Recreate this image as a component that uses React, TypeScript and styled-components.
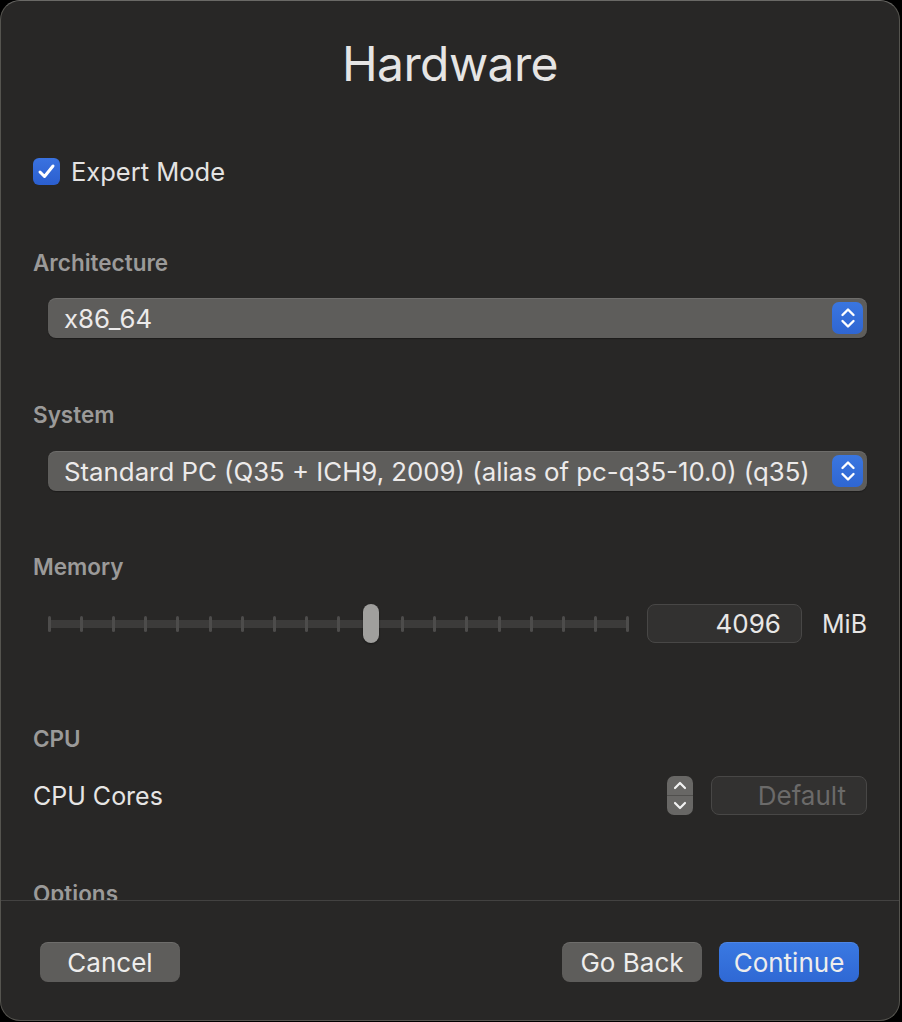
import React from "react";
import styled, { createGlobalStyle } from "styled-components";

const Global = createGlobalStyle`
  html, body { margin: 0; padding: 0; background: #000; }
  body { font-family: Inter, "Noto Sans", sans-serif; -webkit-font-smoothing: antialiased; }
  * { box-sizing: border-box; }
`;

const Window = styled.div`
  width: 900px;
  height: 1021px;
  background: #282726;
  border: 1px solid #55544f;
  border-top-color: #6a6966;
  border-radius: 20px;
  display: flex;
  flex-direction: column;
  overflow: hidden;
`;

const Content = styled.div`
  height: 899px;
  flex-shrink: 0;
  overflow: hidden;
  padding: 0 32px;
  display: flex;
  flex-direction: column;
  & > * { flex-shrink: 0; }
`;

const Title = styled.h1`
  margin: 0;
  height: 124px;
  display: flex;
  align-items: center;
  justify-content: center;
  font-size: 48px;
  font-weight: 400;
  letter-spacing: -0.6px;
  color: #e6e5e4;
`;

const CheckRow = styled.label`
  margin-top: 26px;
  height: 40px;
  display: flex;
  align-items: center;
  gap: 11px;
  font-size: 25.5px;
  color: #e4e3e2;
`;

const CheckBox = styled.span`
  width: 27px;
  height: 27px;
  border-radius: 6px;
  background: linear-gradient(#3a72e0, #2b5fcf);
  display: flex;
  align-items: center;
  justify-content: center;
`;

const SectionLabel = styled.div<{ $top: number }>`
  margin-top: ${(p) => p.$top}px;
  height: 30px;
  display: flex;
  align-items: center;
  font-size: 22.5px;
  font-weight: 600;
  color: #9b9a99;
`;

const Popup = styled.div<{ $top: number }>`
  margin-top: ${(p) => p.$top}px;
  margin-left: 15px;
  height: 40px;
  border-radius: 8px;
  background: #5e5d5b;
  box-shadow: inset 0 1px 0 rgba(255, 255, 255, 0.1), 0 1px 1px rgba(0, 0, 0, 0.3);
  display: flex;
  align-items: center;
  padding: 0 4px 0 16px;
  font-size: 25.8px;
  color: #eceaea;
`;

const PopupText = styled.span`
  flex: 1;
  white-space: nowrap;
`;

const BlueStepper = styled.span`
  width: 31px;
  height: 32px;
  border-radius: 7px;
  background: linear-gradient(#3a76e0, #2f66d2);
  display: flex;
  align-items: center;
  justify-content: center;
`;

const SliderRow = styled.div`
  margin-top: 23px;
  margin-left: 15px;
  height: 39px;
  display: flex;
  align-items: center;
`;

const Slider = styled.div`
  position: relative;
  width: 582px;
  height: 39px;
  margin-right: 18px;
  display: flex;
  align-items: center;
`;

const Track = styled.div`
  width: 100%;
  height: 16px;
  display: flex;
  align-items: center;
  justify-content: space-between;
  background: linear-gradient(#3c3b3a, #3c3b3a) center / 100% 8px no-repeat;
`;

const Tick = styled.span`
  width: 3px;
  height: 16px;
  border-radius: 2px;
  background: #4d4c4b;
`;

const Thumb = styled.span`
  position: absolute;
  top: 0;
  width: 16px;
  height: 39px;
  border-radius: 8px;
  background: #a09f9d;
  box-shadow: 0 1px 2px rgba(0, 0, 0, 0.4);
`;

const Field = styled.div<{ $w: number; $dim?: boolean }>`
  width: ${(p) => p.$w}px;
  height: 39px;
  border-radius: 8px;
  background: #323130;
  border: 1px solid #484746;
  display: flex;
  align-items: center;
  justify-content: flex-end;
  padding-right: 20px;
  font-size: 26px;
  color: ${(p) => (p.$dim ? "#6b6a69" : "#e8e7e6")};
`;

const Unit = styled.span`
  margin-left: 20px;
  font-size: 25px;
  color: #e6e5e4;
`;

const CoresRow = styled.div`
  margin-top: 23px;
  height: 39px;
  display: flex;
  align-items: center;
  font-size: 25px;
  color: #e6e5e4;
`;

const Grow = styled.span`
  flex: 1;
`;

const Stepper = styled.div`
  width: 26px;
  height: 39px;
  border-radius: 7px;
  background: #686765;
  margin-right: 18px;
  display: flex;
  flex-direction: column;
  overflow: hidden;
`;

const StepHalf = styled.span<{ $top?: boolean }>`
  flex: 1;
  display: flex;
  align-items: center;
  justify-content: center;
  border-bottom: ${(p) => (p.$top ? "1px solid #504f4d" : "none")};
`;

const Separator = styled.div`
  height: 1px;
  background: #434241;
  flex-shrink: 0;
`;

const Footer = styled.div`
  flex: 1;
  display: flex;
  align-items: flex-start;
  padding: 41px 40px 0 39px;
  gap: 17px;
`;

const Button = styled.button<{ $primary?: boolean }>`
  width: 140px;
  height: 40px;
  border: none;
  border-radius: 8px;
  background: ${(p) => (p.$primary ? "linear-gradient(#3a79e2, #2f68d4)" : "#5e5d5b")};
  box-shadow: inset 0 1px 0 rgba(255, 255, 255, 0.1);
  font-family: inherit;
  font-size: 26px;
  color: #eeedec;
  padding: 0;
`;

const Spacer = styled.span`
  flex: 1;
`;

const Chevrons = () => (
  <svg width="16" height="24" viewBox="0 0 16 24">
    <path d="M2.5 9 L8 3.5 L13.5 9" fill="none" stroke="#fff" strokeWidth="2.4" strokeLinecap="round" strokeLinejoin="round" />
    <path d="M2.5 15 L8 20.5 L13.5 15" fill="none" stroke="#fff" strokeWidth="2.4" strokeLinecap="round" strokeLinejoin="round" />
  </svg>
);

const SmallChevron = ({ up }: { up?: boolean }) => (
  <svg width="14" height="9" viewBox="0 0 14 9">
    <path
      d={up ? "M2 7 L7 2 L12 7" : "M2 2 L7 7 L12 2"}
      fill="none"
      stroke="#f2f2f2"
      strokeWidth="2.2"
      strokeLinecap="round"
      strokeLinejoin="round"
    />
  </svg>
);

const TICKS = 19;
const VALUE_INDEX = 10;

export default function App() {
  const trackWidth = 582;
  const thumbLeft = 1.5 + (VALUE_INDEX * (trackWidth - 3)) / (TICKS - 1) - 8;
  return (
    <>
      <Global />
      <Window>
        <Content>
          <Title>Hardware</Title>
          <CheckRow>
            <CheckBox>
              <svg width="19" height="17" viewBox="0 0 19 17">
                <path d="M3 9 L7.5 13.5 L16 3" fill="none" stroke="#fff" strokeWidth="3" strokeLinecap="round" strokeLinejoin="round" />
              </svg>
            </CheckBox>
            Expert Mode
          </CheckRow>

          <SectionLabel $top={56}>Architecture</SectionLabel>
          <Popup $top={21}>
            <PopupText>x86_64</PopupText>
            <BlueStepper>
              <Chevrons />
            </BlueStepper>
          </Popup>

          <SectionLabel $top={61}>System</SectionLabel>
          <Popup $top={22}>
            <PopupText>Standard PC (Q35 + ICH9, 2009) (alias of pc-q35-10.0) (q35)</PopupText>
            <BlueStepper>
              <Chevrons />
            </BlueStepper>
          </Popup>

          <SectionLabel $top={60}>Memory</SectionLabel>
          <SliderRow>
            <Slider>
              <Track>
                {Array.from({ length: TICKS }).map((_, i) => (
                  <Tick key={i} />
                ))}
              </Track>
              <Thumb style={{ left: `${thumbLeft}px` }} />
            </Slider>
            <Field $w={155}>4096</Field>
            <Unit>MiB</Unit>
          </SliderRow>

          <SectionLabel $top={80}>CPU</SectionLabel>
          <CoresRow>
            CPU Cores
            <Grow />
            <Stepper>
              <StepHalf $top>
                <SmallChevron up />
              </StepHalf>
              <StepHalf>
                <SmallChevron />
              </StepHalf>
            </Stepper>
            <Field $w={156} $dim>Default</Field>
          </CoresRow>

          <SectionLabel $top={63}>Options</SectionLabel>
        </Content>
        <Separator />
        <Footer>
          <Button>Cancel</Button>
          <Spacer />
          <Button>Go Back</Button>
          <Button $primary>Continue</Button>
        </Footer>
      </Window>
    </>
  );
}
